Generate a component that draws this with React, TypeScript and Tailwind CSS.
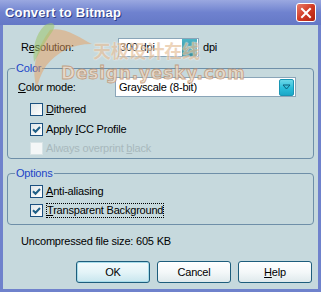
import React from "react";

const font = { fontFamily: '"Liberation Sans", Arial, sans-serif' };

function Check({ checked, disabled }: { checked?: boolean; disabled?: boolean }) {
  return (
    <div
      className={
        "w-[13px] h-[13px] border flex items-center justify-center shrink-0 " +
        (disabled ? "border-[#d8e4e6] bg-[#f4f7f7]" : "border-[#1c5180] bg-gradient-to-br from-[#dfe6e8] to-white")
      }
    >
      {checked && (
        <svg width="9" height="9" viewBox="0 0 9 9">
          <path d="M1 4.2 L3.5 6.8 L8 2" stroke="#1f5f86" strokeWidth="2" fill="none" />
        </svg>
      )}
    </div>
  );
}

function Arrow() {
  return (
    <div className="w-[15px] h-[17px] rounded-[2px] bg-gradient-to-b from-[#6ad8e8] via-[#2cc0dc] to-[#1aa8c8] border border-[#1a96b4] flex items-center justify-center">
      <svg width="9" height="6" viewBox="0 0 9 6">
        <path d="M1 1 L4.5 5 L8 1 Z" fill="none" stroke="#0c5f7a" strokeWidth="1" />
      </svg>
    </div>
  );
}

function Btn({ children, focus }: { children: React.ReactNode; focus?: boolean }) {
  return (
    <div
      className={
        "w-[74px] h-[22px] rounded-[3px] border border-[#1d5d7c] flex items-center justify-center text-[11px] text-black bg-gradient-to-b " +
        (focus ? "from-[#f2fbfd] via-[#e4f4f8] to-[#c8e6ee] shadow-[inset_0_0_0_1px_#a6dcea]" : "from-white via-[#f4f8f9] to-[#dfe9ec]")
      }
    >
      {children}
    </div>
  );
}

export default function App() {
  return (
    <div className="w-[321px] h-[292px] relative overflow-hidden bg-[#6f82cc] flex flex-col tracking-[-0.2px]" style={font}>
      {/* title bar */}
      <div className="h-[25px] shrink-0 flex items-center justify-between pl-[5px] pr-[5px] bg-gradient-to-b from-[#9aa8e0] via-[#6f82cf] to-[#6478c6]">
        <span className="text-white font-bold text-[13px] tracking-[0.2px]" style={{ textShadow: "1px 1px 0 #2f3f86" }}>
          Convert to Bitmap
        </span>
        <div className="w-[20px] h-[19px] rounded-[3px] border border-white bg-gradient-to-br from-[#e87a6a] via-[#d23a24] to-[#b02010] flex items-center justify-center">
          <svg width="12" height="12" viewBox="0 0 12 12">
            <path d="M2 2 L10 10 M10 2 L2 10" stroke="white" strokeWidth="2" strokeLinecap="square" />
          </svg>
        </div>
      </div>
      {/* body */}
      <div className="flex-1 mx-[3px] mb-[3px] bg-[#c6d9dd] text-[11px] text-black flex flex-col px-[4px]">
        <div className="flex items-center h-[19px] mt-[13px] pl-[14px]">
          <span className="w-[97px]">R<u>e</u>solution:</span>
          <div className="w-[81px] h-[19px] bg-white border border-[#8aa5b8] flex items-center justify-between pl-[1px] pr-[1px]">
            <span>300 dpi</span>
            <div className="w-[15px] h-[17px] bg-gradient-to-b from-[#4fb6c8] via-[#3a9aaa] to-[#2f8a98] flex items-center justify-center">
              <svg width="9" height="8" viewBox="0 0 9 8"><path d="M1 6 L4.5 2 L8 6" stroke="#7fd0d8" fill="none" /></svg>
            </div>
          </div>
          <span className="ml-[4px]">dpi</span>
        </div>

        {/* Color group */}
        <fieldset className="mt-[5px] border border-[#6e8fa8] rounded-[4px] px-[10px] pt-0 h-[97px]">
          <legend className="text-[#1c45c8] px-[1px] ml-[-3px] leading-[12px]">Color</legend>
          <div className="flex items-center h-[20px] mt-[3px]">
            <span className="w-[97px]"><u>C</u>olor mode:</span>
            <div className="w-[181px] h-[20px] bg-white border border-[#8aa5b8] flex items-center justify-between pl-[3px] pr-[1px]">
              <span>Grayscale (8-bit)</span>
              <Arrow />
            </div>
          </div>
          <div className="flex flex-col pl-[12px] mt-[2px]">
            <div className="flex items-center gap-[3px] h-[20px]"><Check /><span><u>D</u>ithered</span></div>
            <div className="flex items-center gap-[3px] h-[20px]"><Check checked /><span>Apply <u>I</u>CC Profile</span></div>
            <div className="flex items-center gap-[3px] h-[19px] text-[#a8b8bc]"><Check disabled /><span>Always overprint <u>b</u>lack</span></div>
          </div>
        </fieldset>

        {/* Options group */}
        <fieldset className="mt-[8px] border border-[#6e8fa8] rounded-[4px] px-[10px] pt-0 h-[58px]">
          <legend className="text-[#1c45c8] px-[1px] ml-[-3px] leading-[12px]">Options</legend>
          <div className="flex flex-col pl-[12px] mt-[3px]">
            <div className="flex items-center gap-[3px] h-[19px]"><Check checked /><span><u>A</u>nti-aliasing</span></div>
            <div className="flex items-center gap-[3px] h-[19px]"><Check checked /><span className="border border-dotted border-black leading-[13px]"><u>T</u>ransparent Background</span></div>
          </div>
        </fieldset>

        <div className="pl-[14px] mt-[8px] h-[16px] leading-[16px]">Uncompressed file size: 605 KB</div>

        <div className="flex justify-end gap-[7px] mt-[12px] pr-[2px]">
          <Btn focus>OK</Btn>
          <Btn>Cancel</Btn>
          <Btn><u>H</u>elp</Btn>
        </div>
      </div>

      {/* watermark */}
      <div className="absolute left-0 top-0 w-[321px] h-[292px] pointer-events-none">
        <svg className="absolute left-0 top-0" width="321" height="292">
          <path d="M50 30 C 64 26, 80 38, 92 44 C 72 44, 57 52, 46 66 C 40 76, 38 82, 37 90 C 31 70, 35 50, 50 30 Z" fill="#e8a060" opacity="0.5" />
          <path d="M44 26 C 52 20, 58 24, 52 32 C 46 40, 40 52, 34 62 C 32 48, 36 34, 44 26 Z" fill="#9cc46a" opacity="0.55" />
        </svg>
        <div
          className="absolute left-[93px] top-[39px] text-[18px] leading-[22px] font-bold text-[#e6c29e]"
          style={{ fontFamily: '"Noto Sans CJK SC", sans-serif', opacity: 0.7, textShadow: "0 0 2px #fff, 0 0 1px #fff" }}
        >
          天极设计在线
        </div>
        <div
          className="absolute left-[61px] top-[63px] text-[17px] leading-[20px] font-bold tracking-[0.8px] text-[#eedac6]"
          style={{ fontFamily: '"DejaVu Sans", sans-serif', opacity: 0.8, WebkitTextStroke: "0.8px #c0906c" }}
        >
          Design.yesky.com
        </div>
      </div>
    </div>
  );
}
